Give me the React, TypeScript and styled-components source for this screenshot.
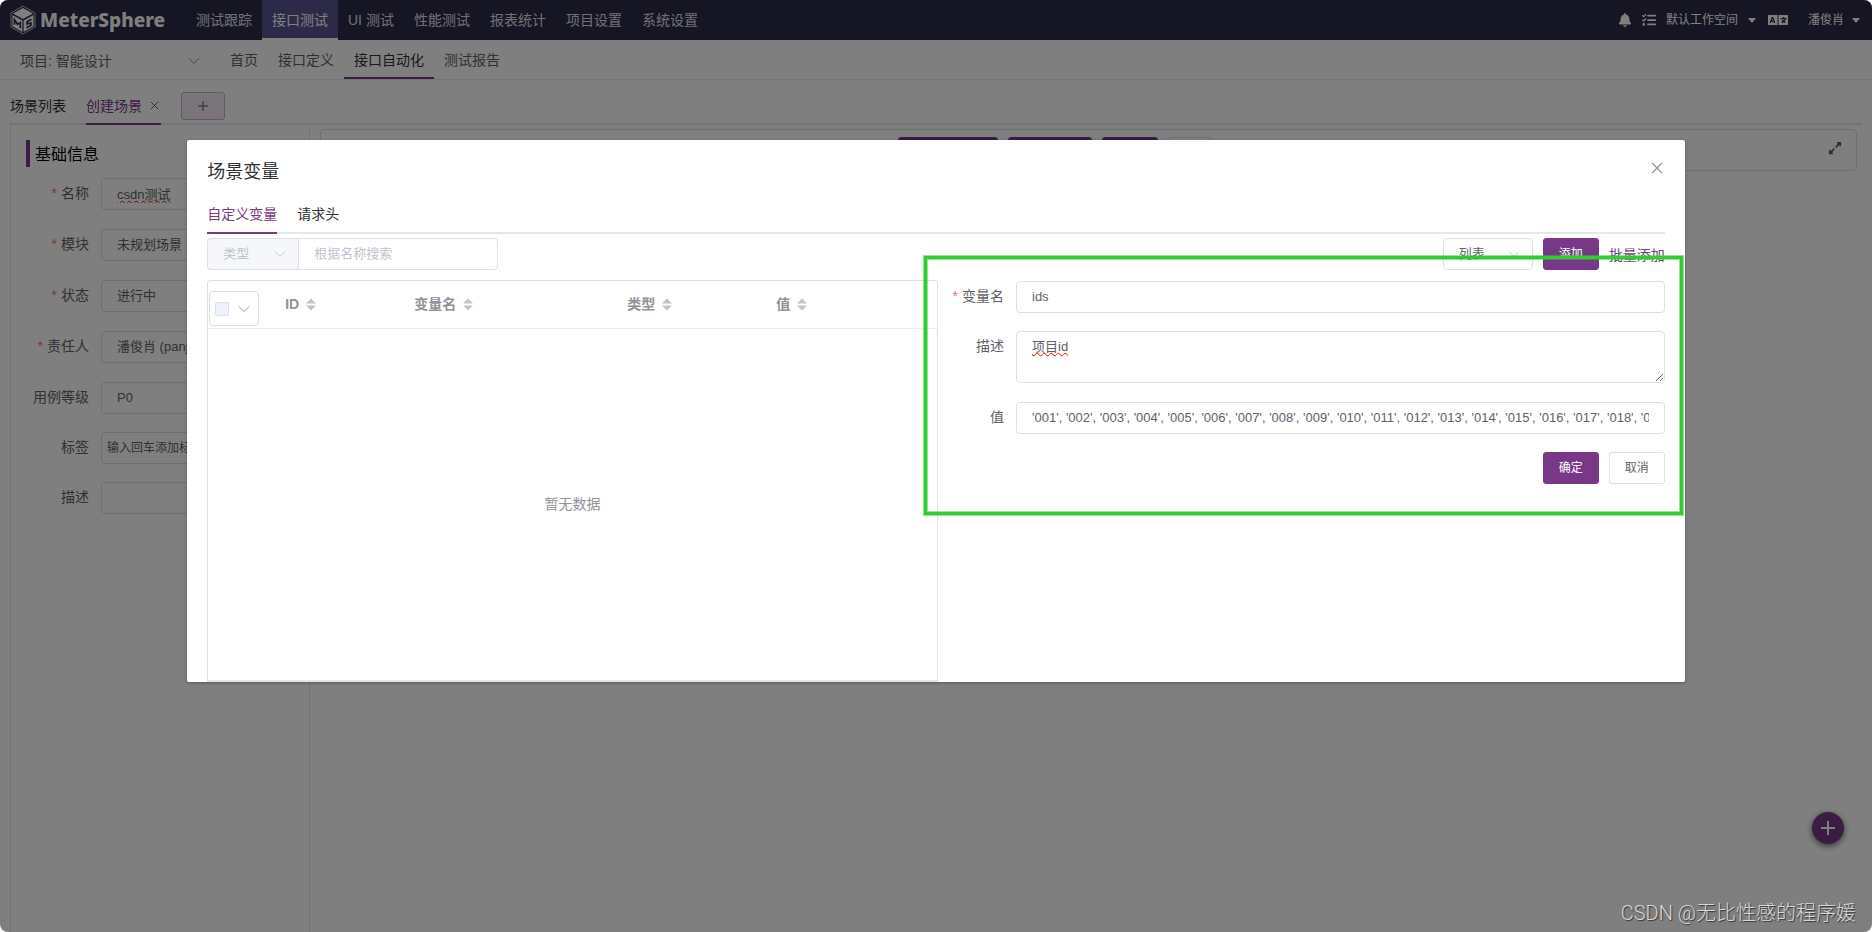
import React from 'react';
import styled, { createGlobalStyle, css } from 'styled-components';
import { FaBell, FaExpandAlt, FaLanguage, FaTasks } from 'react-icons/fa';

const purple = '#783887';
const border = '#dcdfe6';
const textRegular = '#606266';
const textMuted = '#909399';
const placeholder = '#c0c4cc';

const GlobalStyle = createGlobalStyle`
  *, *::before, *::after { box-sizing: border-box; }
  body { margin: 0; background: #fff; }
  body, button, input, select, textarea {
    font-family: "Liberation Sans", "Noto Sans CJK SC", sans-serif;
  }
  button { padding: 0; cursor: pointer; }
  a { text-decoration: none; }
`;

const Page = styled.div`
  position: relative;
  display: flex;
  flex-direction: column;
  min-height: 100vh;
  border-radius: 8px;
  overflow: hidden;
  background: #fff;
  font-size: 14px;
  line-height: 20px;
  color: #303133;
`;

/* ---------- top bar ---------- */

const TopBar = styled.header`
  display: flex;
  height: 40px;
  padding: 0 12px 0 10px;
  background: #2c2a48;
  color: #fff;
`;

const Brand = styled.a`
  display: flex;
  align-items: center;
  gap: 4px;
  width: 176px;
  color: #fff;
  font: 800 19px/24px "Noto Sans", sans-serif;
`;

const TopNav = styled.nav`
  display: flex;
  flex: 1;
`;

const TopLink = styled.a<{ $active?: boolean }>`
  padding: 0 10px;
  line-height: 40px;
  color: ${p => (p.$active ? '#fff' : '#e0e0e4')};
  ${p =>
    p.$active &&
    css`
      background: #595591;
      border-bottom: 2px solid #fff;
    `}
`;

const TopTools = styled.div`
  display: flex;
  align-items: center;
  gap: 10px;
  font-size: 12px;
`;

const ToolButton = styled.button<{ $gap?: string }>`
  display: flex;
  align-items: center;
  gap: ${p => p.$gap || '10px'};
  border: 0;
  background: none;
  color: #fff;
  font-size: 12px;
  line-height: 18px;
`;

const LanguageButton = styled(ToolButton)`
  margin: 0 10px 0 2px;
`;

/* ---------- project bar ---------- */

const SubBar = styled.div`
  display: flex;
  height: 40px;
  border-bottom: 1px solid #e6e6e6;
`;

const ProjectPicker = styled.div`
  position: relative;
  display: flex;
  align-items: center;
  width: 220px;
  padding: 2px 20px 0 20px;
  color: ${textRegular};
`;

const SubLink = styled.a<{ $active?: boolean }>`
  padding: 0 10px;
  line-height: 40px;
  color: ${p => (p.$active ? '#303133' : textRegular)};
  border-bottom: ${p => (p.$active ? `2px solid ${purple}` : '0')};
`;

/* ---------- shared form parts ---------- */

const selectBase = css`
  appearance: none;
  flex: 1;
  min-width: 0;
  height: 100%;
  border: 0;
  padding: 0;
  background: transparent;
  outline: none;
  opacity: 1;
`;

const BareSelect = styled.select`
  ${selectBase}
  font-size: 14px;
  color: inherit;
`;

const SelectBox = styled.div<{ $width?: string; $muted?: boolean }>`
  display: flex;
  align-items: center;
  width: ${p => p.$width || '100%'};
  height: 32px;
  padding: 0 12px 0 15px;
  border: 1px solid ${border};
  border-radius: 4px;
  background: ${p => (p.$muted ? '#f5f7fa' : '#fff')};
  color: ${p => (p.$muted ? placeholder : textRegular)};

  select {
    ${selectBase}
    padding-bottom: 2px;
    font-size: 13px;
    color: inherit;
  }
`;

const fieldBase = css<{ $misspelt?: boolean }>`
  display: block;
  width: 100%;
  padding: 0 15px 2px;
  border: 1px solid ${border};
  border-radius: 4px;
  background: #fff;
  outline: none;
  font-size: 13px;
  color: ${textRegular};
  text-decoration: ${p => (p.$misspelt ? 'underline wavy #f00 1px' : 'none')};
  &::placeholder { color: ${placeholder}; opacity: 1; }
`;

const TextInput = styled.input<{ $misspelt?: boolean }>`
  ${fieldBase}
  height: 32px;
`;

const TagInput = styled(TextInput)`
  padding: 0 5px;
  font-size: 12px;
  &::placeholder { color: ${textRegular}; }
`;

const TextArea = styled.textarea<{ $misspelt?: boolean }>`
  ${fieldBase}
  height: 52px;
  padding: 5px 15px;
  line-height: 20px;
  resize: vertical;
`;

const Button = styled.button<{ $primary?: boolean }>`
  height: 32px;
  padding: 0 15px;
  border: 1px solid ${p => (p.$primary ? purple : border)};
  border-radius: 3px;
  background: ${p => (p.$primary ? purple : '#fff')};
  color: ${p => (p.$primary ? '#fff' : textRegular)};
  font-size: 12px;
  line-height: 12px;
`;

const FieldRow = styled.div<{ $label: string; $min?: string }>`
  display: grid;
  grid-template-columns: ${p => p.$label} 1fr;
  align-items: start;
  min-height: ${p => p.$min || '32px'};
`;

const FieldLabel = styled.label<{ $required?: boolean }>`
  padding-right: 12px;
  text-align: right;
  line-height: 30px;
  white-space: nowrap;
  color: ${textRegular};
  ${p =>
    p.$required &&
    css`
      &::before {
        content: '*';
        margin-right: 4px;
        color: #f56c6c;
      }
    `}
`;

const Fields = styled.div`
  display: flex;
  flex-direction: column;
  gap: 18px;
`;

/* ---------- scenario tabs ---------- */

const Workspace = styled.main`
  flex: 1;
  display: flex;
  flex-direction: column;
  padding: 7px 10px 0;
`;

const ScenarioTabs = styled.div`
  display: flex;
  gap: 20px;
  height: 38px;
  border-bottom: 2px solid #e4e7ed;
`;

const ScenarioTab = styled.button<{ $active?: boolean }>`
  display: flex;
  align-items: center;
  gap: 8px;
  height: 38px;
  border: 0;
  border-bottom: 2px solid ${p => (p.$active ? purple : 'transparent')};
  padding-right: ${p => (p.$active ? '2px' : '0')};
  background: none;
  color: ${p => (p.$active ? purple : '#303133')};
  font-size: 14px;
`;

const AddTab = styled.button`
  display: grid;
  place-items: center;
  width: 44px;
  height: 28px;
  margin-top: 5px;
  border: 1px solid #c9afcf;
  border-radius: 3px;
  background: #f2ebf3;
  color: ${purple};
`;

const Columns = styled.div`
  flex: 1;
  display: flex;
  gap: 10px;
`;

const SidePanel = styled.section`
  width: 300px;
  padding: 15px 15px 0;
  border: solid #e6e6e6;
  border-width: 0 1px;
`;

const SideTitle = styled.h2`
  margin: 0 0 11px;
  padding: 2px 0 0 5px;
  border-left: 4px solid ${purple};
  font-size: 16px;
  font-weight: 400;
  line-height: 25px;
  color: #000;
`;

const Canvas = styled.section`
  flex: 1;
  padding: 4px 5px 0 0;
`;

const RunBar = styled.div`
  display: flex;
  align-items: flex-start;
  height: 42px;
  padding: 7px 14px;
  border: 1px solid ${border};
  border-radius: 4px;
`;

const RunSpace = styled.span<{ $grow: number }>`
  flex: ${p => p.$grow} 1 0;
`;

const RunButtons = styled.div`
  display: grid;
  grid-template-columns: 100px 84px 56px 44px;
  gap: 10px;
`;

const RunButton = styled(Button)`
  height: 28px;
  padding: 0;
`;

const ExpandButton = styled(ToolButton)`
  margin-top: 4px;
  color: ${textRegular};
`;

const FloatingAdd = styled.button`
  position: absolute;
  right: 28px;
  bottom: 88px;
  display: grid;
  place-items: center;
  width: 32px;
  height: 32px;
  border: 0;
  border-radius: 50%;
  background: ${purple};
  color: #fff;
  box-shadow: 0 2px 6px rgba(0, 0, 0, 0.6);
`;

/* ---------- dialog ---------- */

const Overlay = styled.div`
  position: absolute;
  inset: 0;
  background: rgba(0, 0, 0, 0.5);
`;

const Dialog = styled.section`
  position: relative;
  width: 80%;
  margin: 140px auto 0;
  border-radius: 2px;
  background: #fff;
  box-shadow: 0 1px 3px rgba(0, 0, 0, 0.3);
`;

const DialogHead = styled.header`
  display: flex;
  justify-content: space-between;
  padding: 20px 20px 10px;
`;

const DialogTitle = styled.h1`
  margin: 0;
  font-size: 18px;
  font-weight: 400;
  line-height: 24px;
`;

const CloseButton = styled.button`
  display: grid;
  place-items: center;
  width: 16px;
  height: 16px;
  border: 0;
  background: none;
  color: ${textMuted};
`;

const DialogBody = styled.div`
  padding: 0 20px;
`;

const DialogTabs = styled.div`
  display: flex;
  gap: 20px;
  height: 40px;
  border-bottom: 2px solid #e4e7ed;
`;

const DialogTab = styled.button<{ $active?: boolean }>`
  height: 40px;
  padding-top: 2px;
  border: 0;
  border-bottom: 2px solid ${p => (p.$active ? purple : 'transparent')};
  background: none;
  color: ${p => (p.$active ? purple : '#303133')};
  font-size: 14px;
  line-height: 36px;
`;

const FilterBar = styled.div`
  display: flex;
  align-items: center;
  gap: 10px;
  padding: 4px 0 10px;
`;

const SearchGroup = styled.div`
  display: flex;
  width: 291px;
  margin-right: auto;

  ${SelectBox} {
    border-right: 0;
    border-radius: 4px 0 0 4px;
  }
  ${TextInput} {
    flex: 1;
    min-width: 0;
    border-radius: 0 4px 4px 0;
  }
`;

const BatchLink = styled.a`
  padding-top: 2px;
  color: ${purple};
`;

const Split = styled.div`
  display: grid;
  grid-template-columns: calc(50% + 2px) 1fr;
`;

const TableCard = styled.div`
  display: flex;
  flex-direction: column;
  min-height: 402px;
  border: 1px solid ${border};
  border-bottom: 2px solid #e4e7ed;
  border-radius: 4px 4px 0 0;
`;

const VariableTable = styled.table`
  width: 100%;
  table-layout: fixed;
  border-collapse: collapse;

  th {
    height: 47px;
    padding: 0 10px;
    border-bottom: 1px solid #ebeef5;
    text-align: left;
    vertical-align: middle;
    color: ${textMuted};
    font-size: 14px;
    font-weight: 700;
    line-height: 23px;
  }
  th:first-child {
    padding: 9px 0 0 1px;
  }
`;

const Col = styled.col<{ $width: string }>`
  width: ${p => p.$width};
`;

const SortLabel = styled.button`
  display: flex;
  align-items: center;
  gap: 7px;
  border: 0;
  background: none;
  color: inherit;
  font: inherit;
`;

const PickAll = styled.div`
  display: flex;
  align-items: center;
  justify-content: space-between;
  width: 50px;
  height: 35px;
  padding: 0 8px 0 5px;
  border: 1px solid ${border};
  border-radius: 4px;
`;

const CheckBox = styled.input`
  appearance: none;
  width: 14px;
  height: 14px;
  margin: 0;
  border: 1px solid ${border};
  border-radius: 2px;
  background: #edf2fc;
`;

const EmptyText = styled.p`
  flex: 1;
  display: grid;
  place-items: center;
  margin: 0;
  color: ${textMuted};
`;

const VariableForm = styled.form`
  padding-top: 1px;
`;

const FormActions = styled.div`
  display: flex;
  justify-content: flex-end;
  gap: 10px;
`;

const Highlight = styled.div`
  position: absolute;
  top: 116px;
  left: calc(50% - 12px);
  right: 2px;
  height: 259px;
  border: 3px solid #2ccf2c;
  box-shadow: 0 0 0 1px rgba(44, 207, 44, 0.5), inset 0 0 0 1px rgba(44, 207, 44, 0.5);
  pointer-events: none;
`;

const Watermark = styled.span`
  position: absolute;
  right: 16px;
  bottom: 7px;
  font-family: Roboto, "Noto Sans CJK SC", sans-serif;
  font-size: 20px;
  font-weight: 300;
  line-height: 24px;
  color: #d8d8d8;
  text-shadow: 1px 1px 1px rgba(0, 0, 0, 0.6);
`;

/* ---------- drawings ---------- */

const Logo = () => (
  <svg width="26" height="30" viewBox="0 0 26 30" fill="none" aria-hidden="true">
    <path d="M13 1 25 8v14l-12 7L1 22V8z" stroke="currentColor" strokeWidth="1" opacity=".7" />
    <path d="M13 3 23 8.600 13 14 3 8.600z" fill="currentColor" />
    <path d="M2.500 10 12.400 15.400V27L2.500 21.300z" fill="currentColor" />
    <path d="M23.500 10 13.600 15.400V27l9.900-5.700z" fill="currentColor" />
    <path d="M4.500 19.800v-5l3 4.500 2.800-1.600v5.600" stroke="#2c2a48" strokeWidth="1.700" />
    <path d="M21.500 14.200l-4.500 2.500v2.200l4-1v2.400l-4.600 2.500" stroke="#2c2a48" strokeWidth="1.600" />
  </svg>
);

const Chevron = ({ color = 'currentColor' }: { color?: string }) => (
  <svg width="12" height="12" viewBox="0 0 12 12" fill="none" aria-hidden="true">
    <path d="M1 3.500 6 8.500l5-5" stroke={color} />
  </svg>
);

const Cross = ({ size = 12 }: { size?: number }) => (
  <svg width={size} height={size} viewBox="0 0 12 12" fill="none" aria-hidden="true">
    <path d="M1 1l10 10M11 1 1 11" stroke="currentColor" strokeWidth="1.200" />
  </svg>
);

const Plus = ({ size, weight = 1 }: { size: number; weight?: number }) => (
  <svg width={size} height={size} viewBox={`0 0 ${size} ${size}`} fill="none" aria-hidden="true">
    <path d={`M0 ${size / 2}h${size}M${size / 2} 0v${size}`} stroke="currentColor" strokeWidth={weight} />
  </svg>
);

const Caret = () => (
  <svg width="8" height="5" viewBox="0 0 8 5" aria-hidden="true">
    <path d="M0 0h8L4 5z" fill="currentColor" />
  </svg>
);

const SortCarets = () => (
  <svg width="10" height="13" viewBox="0 0 10 13" fill={placeholder} aria-hidden="true">
    <path d="M0 5.500 5 .5l5 5zM0 7.500h10l-5 5z" />
  </svg>
);

/* ---------- data ---------- */

const topLinks = ['测试跟踪', '接口测试', 'UI 测试', '性能测试', '报表统计', '项目设置', '系统设置'];
const subLinks = ['首页', '接口定义', '接口自动化', '测试报告'];
const basicSelects = [
  { id: 'module', label: '模块', value: '未规划场景' },
  { id: 'status', label: '状态', value: '进行中' },
  { id: 'owner', label: '责任人', value: '潘俊肖 (panjx)' },
];
const columns = ['ID', '变量名', '类型', '值'];
const idList = Array.from({ length: 30 }, (_, i) => `'${String(i + 1).padStart(3, '0')}'`).join(', ');

export default function App() {
  return (
    <Page>
      <GlobalStyle />
      <TopBar>
        <Brand href="#">
          <Logo />
          MeterSphere
        </Brand>
        <TopNav>
          {topLinks.map(t => (
            <TopLink key={t} href="#" $active={t === '接口测试'}>{t}</TopLink>
          ))}
        </TopNav>
        <TopTools>
          <ToolButton aria-label="通知"><FaBell size={14} /></ToolButton>
          <ToolButton aria-label="任务"><FaTasks size={14} /></ToolButton>
          <ToolButton>默认工作空间 <Caret /></ToolButton>
          <LanguageButton aria-label="语言"><FaLanguage size={20} /></LanguageButton>
          <ToolButton $gap="8px">潘俊肖 <Caret /></ToolButton>
        </TopTools>
      </TopBar>

      <SubBar>
        <ProjectPicker>
          <BareSelect aria-label="项目"><option>项目: 智能设计</option></BareSelect>
          <Chevron color={textMuted} />
        </ProjectPicker>
        {subLinks.map(t => (
          <SubLink key={t} href="#" $active={t === '接口自动化'}>{t}</SubLink>
        ))}
      </SubBar>

      <Workspace>
        <ScenarioTabs>
          <ScenarioTab>场景列表</ScenarioTab>
          <ScenarioTab $active>创建场景 <Cross size={9} /></ScenarioTab>
          <AddTab aria-label="新建标签"><Plus size={10} /></AddTab>
        </ScenarioTabs>
        <Columns>
          <SidePanel>
            <SideTitle>基础信息</SideTitle>
            <Fields>
              <FieldRow $label="75px" $min="33px">
                <FieldLabel htmlFor="name" $required>名称</FieldLabel>
                <TextInput id="name" defaultValue="csdn测试" $misspelt />
              </FieldRow>
              {basicSelects.map(f => (
                <FieldRow key={f.id} $label="75px" $min="33px">
                  <FieldLabel htmlFor={f.id} $required>{f.label}</FieldLabel>
                  <SelectBox>
                    <select id={f.id}><option>{f.value}</option></select>
                    <Chevron color={placeholder} />
                  </SelectBox>
                </FieldRow>
              ))}
              <FieldRow $label="75px">
                <FieldLabel htmlFor="level">用例等级</FieldLabel>
                <SelectBox>
                  <select id="level"><option>P0</option></select>
                  <Chevron color={placeholder} />
                </SelectBox>
              </FieldRow>
              <FieldRow $label="75px">
                <FieldLabel htmlFor="tags">标签</FieldLabel>
                <TagInput id="tags" placeholder="输入回车添加标签" />
              </FieldRow>
              <FieldRow $label="75px">
                <FieldLabel htmlFor="note">描述</FieldLabel>
                <TextInput id="note" />
              </FieldRow>
            </Fields>
          </SidePanel>
          <Canvas>
            <RunBar>
              <RunSpace $grow={563} />
              <RunButtons>
                <RunButton $primary aria-label="场景变量" />
                <RunButton $primary aria-label="调试" />
                <RunButton $primary aria-label="保存" />
                <RunButton aria-label="更多" />
              </RunButtons>
              <RunSpace $grow={616} />
              <ExpandButton aria-label="全屏"><FaExpandAlt size={14} /></ExpandButton>
            </RunBar>
          </Canvas>
        </Columns>
      </Workspace>
      <FloatingAdd aria-label="新增"><Plus size={14} weight={2} /></FloatingAdd>

      <Overlay>
        <Dialog role="dialog" aria-labelledby="dialog-title">
          <DialogHead>
            <DialogTitle id="dialog-title">场景变量</DialogTitle>
            <CloseButton aria-label="关闭"><Cross size={12} /></CloseButton>
          </DialogHead>
          <DialogBody>
            <DialogTabs>
              <DialogTab $active>自定义变量</DialogTab>
              <DialogTab>请求头</DialogTab>
            </DialogTabs>
            <FilterBar>
              <SearchGroup>
                <SelectBox $width="91px" $muted>
                  <select aria-label="类型"><option>类型</option></select>
                  <Chevron />
                </SelectBox>
                <TextInput aria-label="搜索" placeholder="根据名称搜索" />
              </SearchGroup>
              <SelectBox $width="90px">
                <select aria-label="视图"><option>列表</option></select>
                <Chevron color={placeholder} />
              </SelectBox>
              <Button $primary>添加</Button>
              <BatchLink href="#">批量添加</BatchLink>
            </FilterBar>
            <Split>
              <TableCard>
                <VariableTable>
                  <colgroup>
                    <Col $width="67px" />
                    <Col $width="129px" />
                    <Col $width="213px" />
                    <Col $width="149px" />
                    <col />
                  </colgroup>
                  <thead>
                    <tr>
                      <th>
                        <PickAll>
                          <CheckBox type="checkbox" aria-label="全选" />
                          <Chevron />
                        </PickAll>
                      </th>
                      {columns.map(c => (
                        <th key={c}>
                          <SortLabel>{c}<SortCarets /></SortLabel>
                        </th>
                      ))}
                    </tr>
                  </thead>
                </VariableTable>
                <EmptyText>暂无数据</EmptyText>
              </TableCard>
              <VariableForm onSubmit={e => e.preventDefault()}>
                <Fields>
                  <FieldRow $label="78px">
                    <FieldLabel htmlFor="var-name" $required>变量名</FieldLabel>
                    <TextInput id="var-name" defaultValue="ids" />
                  </FieldRow>
                  <FieldRow $label="78px" $min="53px">
                    <FieldLabel htmlFor="var-note">描述</FieldLabel>
                    <TextArea id="var-note" defaultValue="项目id" $misspelt />
                  </FieldRow>
                  <FieldRow $label="78px">
                    <FieldLabel htmlFor="var-value">值</FieldLabel>
                    <TextInput id="var-value" defaultValue={idList} />
                  </FieldRow>
                  <FormActions>
                    <Button type="submit" $primary>确定</Button>
                    <Button type="button">取消</Button>
                  </FormActions>
                </Fields>
              </VariableForm>
            </Split>
          </DialogBody>
          <Highlight />
        </Dialog>
      </Overlay>
      <Watermark>CSDN @无比性感的程序媛</Watermark>
    </Page>
  );
}
